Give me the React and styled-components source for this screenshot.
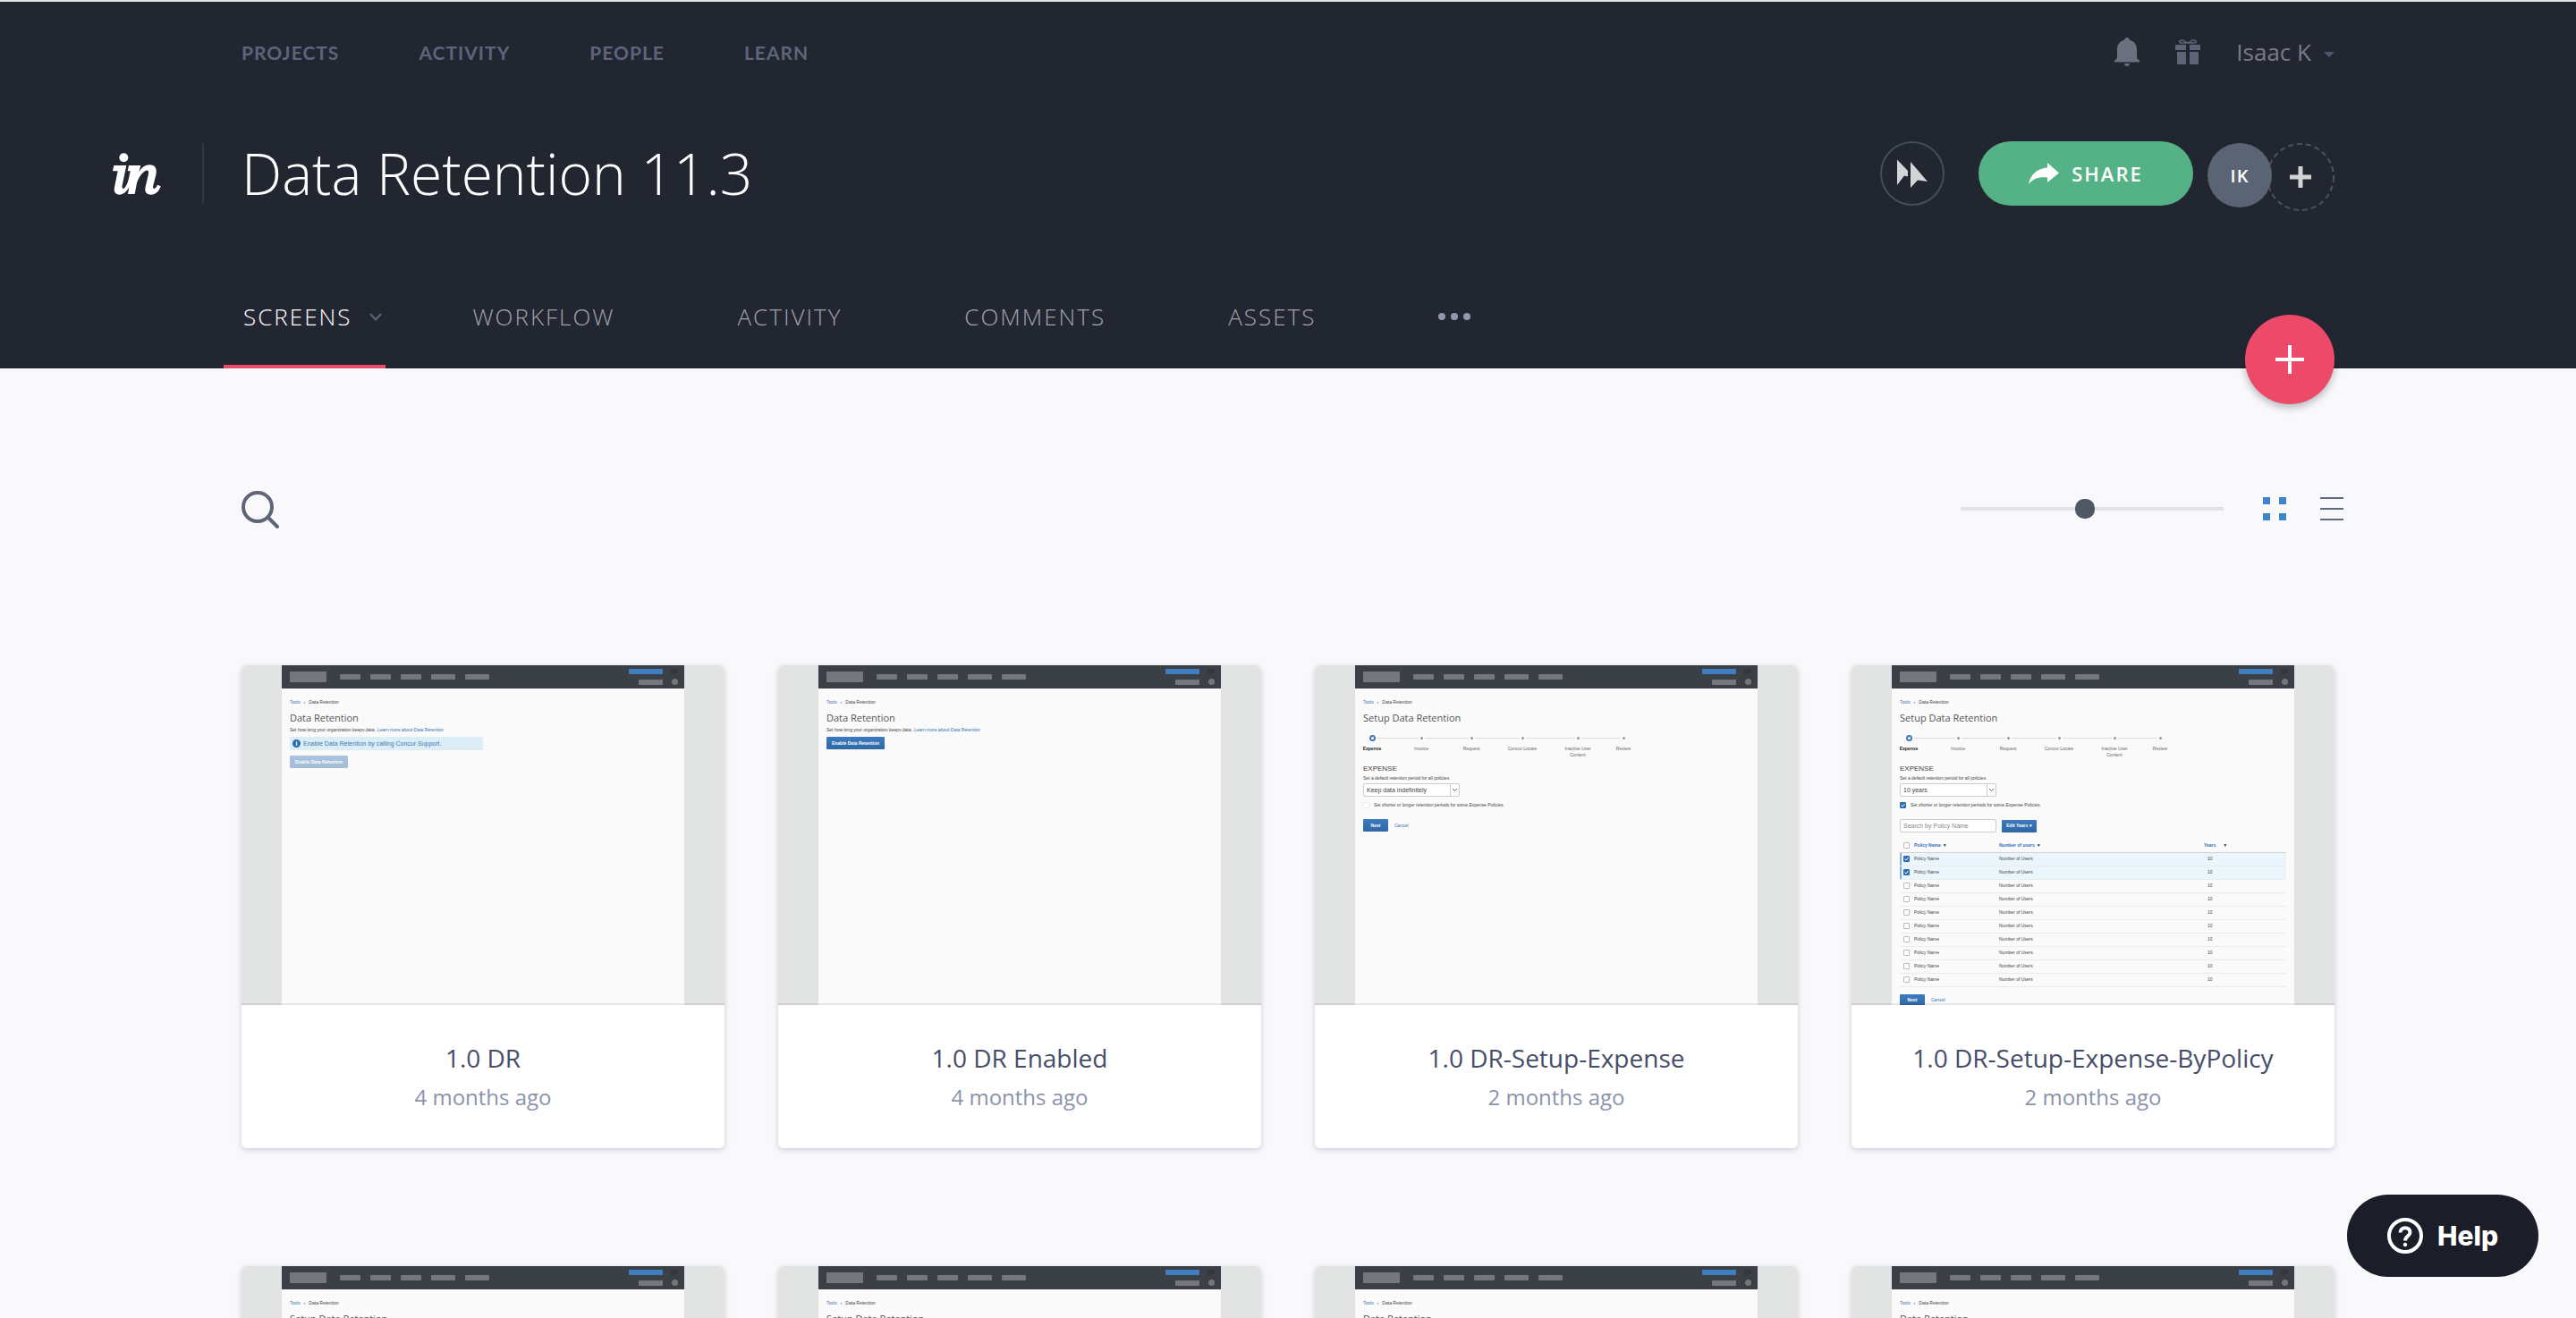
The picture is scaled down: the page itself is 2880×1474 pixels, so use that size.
import React, { useState } from "react";
import styled, { createGlobalStyle, css } from "styled-components";

const color = {
  header: "#222631",
  page: "#f9f9fb",
  accent: "#ed4a69",
  green: "#55b287",
  slate: "#5d6576",
  blue: "#3d85c8",
};

const GlobalStyle = createGlobalStyle`
  *, *::before, *::after { box-sizing: border-box; }
  body {
    margin: 0;
    background: ${color.page};
    font-family: "Open Sans", "Noto Sans", sans-serif;
  }
  button { font: inherit; border: 0; padding: 0; background: none; cursor: pointer; }
  a { color: inherit; text-decoration: none; }
  svg { display: block; flex: none; }
`;

/* ---------- Shell ---------- */

const Shell = styled.div`
  height: 100vh;
  overflow-y: auto;
  scrollbar-width: none;
  background: ${color.page};
`;

const Container = styled.div`
  width: 100%;
  max-width: 2340px;
  margin: 0 auto;
`;

const Header = styled.header`
  background: ${color.header};
  border-top: 2px solid #dfe3e2;
`;

const TopBar = styled.div`
  display: flex;
  align-items: center;
  justify-content: space-between;
  height: 114px;
  padding-bottom: 2px;
`;

const TopNav = styled.nav`
  display: flex;
  gap: 89px;
  font-family: Lato, sans-serif;
  font-size: 21px;
  font-weight: 700;
  letter-spacing: 1px;
  color: #5d657a;
`;

const UserTools = styled.div`
  display: flex;
  align-items: center;
  gap: 40px;
  color: #6d7080;
`;

const IconButton = styled.button`
  display: flex;
  align-items: center;
  justify-content: center;
  color: ${(p) => p.$color || "inherit"};
`;

const UserMenu = styled.button`
  display: flex;
  align-items: center;
  gap: 14px;
  font-size: 26px;
  line-height: 36px;
  color: #787b8a;
  svg { margin-top: 6px; }
`;

/* ---------- Title row ---------- */

const TitleRow = styled.div`
  display: flex;
  align-items: center;
  height: 156px;
  margin: 0 0 24px -145px;
`;

const Brand = styled.a`
  display: flex;
  align-items: center;
  height: 66px;
  width: 103px;
  margin-right: 42px;
  padding-left: 1px;
  border-right: 2px solid #323744;
`;

const Title = styled.h1`
  flex: 1;
  margin: 0;
  font-size: 64px;
  font-weight: 300;
  line-height: 88px;
  color: #fff;
`;

const Actions = styled.div`
  display: flex;
  align-items: flex-start;
  height: 72px;
`;

const PlayButton = styled(IconButton)`
  width: 72px;
  height: 72px;
  margin-right: 38px;
  border: 2px solid #474c5a;
  border-radius: 50%;
`;

const ShareButton = styled.button`
  display: flex;
  align-items: center;
  justify-content: center;
  gap: 14px;
  width: 240px;
  height: 72px;
  margin-right: 16px;
  border-radius: 36px;
  background: ${color.green};
  color: #fff;
  font-size: 22px;
  font-weight: 600;
  letter-spacing: 2px;
`;

const People = styled.div`
  display: flex;
  align-items: flex-start;
  margin-top: 2px;
`;

const Avatar = styled.span`
  z-index: 1;
  display: flex;
  align-items: center;
  justify-content: center;
  width: 72px;
  height: 72px;
  margin-right: -6px;
  border-radius: 50%;
  background: #5b6474;
  color: #fff;
  font-size: 20px;
  font-weight: 600;
  letter-spacing: 1px;
`;

/* ---------- Tabs ---------- */

const TabBar = styled.div`
  position: relative;
  display: flex;
  align-items: stretch;
  height: 116px;
`;

const Tabs = styled.nav`
  display: flex;
  gap: 97px;
  margin-left: -20px;
`;

const Tab = styled.a`
  display: flex;
  align-items: center;
  gap: 20px;
  padding: 0 20px;
  font-size: 26px;
  font-weight: 300;
  letter-spacing: 2px;
  color: #a0a3ad;
  ${(p) =>
    p.$active &&
    css`
      margin-right: -20px;
      padding: 0 4px 0 22px;
      color: #fff;
      box-shadow: inset 0 -4px ${color.accent};
    `}
`;

const AddButton = styled.button`
  position: absolute;
  right: 0;
  bottom: -40px;
  display: flex;
  align-items: center;
  justify-content: center;
  width: 100px;
  height: 100px;
  border-radius: 50%;
  background: ${color.accent};
  box-shadow: 0 4px 8px rgba(30, 35, 50, 0.3);
`;

/* ---------- Toolbar ---------- */

const Toolbar = styled.div`
  display: flex;
  align-items: center;
  justify-content: space-between;
  height: 40px;
  margin: 138px -10px 154px 0;
`;

const ViewTools = styled.div`
  display: flex;
  align-items: center;
  padding-bottom: 2px;
`;

const SizeSlider = styled.input`
  appearance: none;
  width: 294px;
  height: 22px;
  margin: 0 44px 0 0;
  background: linear-gradient(#dfe3e8, #dfe3e8) center / 100% 4px no-repeat;
  &::-webkit-slider-thumb {
    appearance: none;
    width: 22px;
    height: 22px;
    border-radius: 10px;
    background: #4e5766;
  }
`;

const ListButton = styled(IconButton)`
  margin-left: 38px;
`;

/* ---------- Cards ---------- */

const Grid = styled.main`
  display: grid;
  grid-template-columns: repeat(4, minmax(0, 1fr));
  gap: 132px 60px;
  padding-bottom: 132px;
`;

const Card = styled.a`
  display: block;
  overflow: hidden;
  border-radius: 6px;
  background: #fff;
  box-shadow: 0 2px 6px rgba(60, 70, 110, 0.24);
`;

const Thumb = styled.div`
  position: relative;
  height: 380px;
  padding: 0 45px;
  overflow: hidden;
  background: #e2e4e3;
  &::after {
    content: "";
    position: absolute;
    inset: auto 0 0;
    height: 2px;
    background: rgba(0, 0, 0, 0.08);
  }
`;

const Caption = styled.div`
  height: 160px;
  padding-top: 37px;
  text-align: center;
`;

const CardTitle = styled.h2`
  margin: 0;
  font-size: 28px;
  font-weight: 400;
  line-height: 44px;
  color: #464d68;
`;

const CardDate = styled.p`
  margin: 0;
  font-size: 24px;
  line-height: 44px;
  color: #8a94ab;
`;

/* ---------- Screen previews ---------- */

const Sheet = styled.div`
  height: 390px;
  background: #fafafa;
  color: #444;
  font-family: "Liberation Sans", Arial, sans-serif;
  font-size: 5px;
  line-height: 7px;
`;

const SheetBar = styled.div`
  display: flex;
  align-items: center;
  justify-content: space-between;
  height: 26px;
  padding: 0 7px 0 9px;
  background: #3b3f46;
`;

const BarGroup = styled.div`
  display: flex;
  align-items: center;
  gap: 11px;
`;

const BarRight = styled.div`
  display: grid;
  grid-template-columns: auto 8px;
  align-items: center;
  justify-items: end;
  gap: 5px 9px;
`;

const Pill = styled.i`
  width: ${(p) => p.$w}px;
  height: ${(p) => p.$h || 6}px;
  border-radius: ${(p) => p.$r || 1}px;
  background: ${(p) => p.$bg || "#74777b"};
`;

const LogoPill = styled(Pill)`
  margin-right: 4px;
`;

const SheetBody = styled.div`
  padding: 12px 9px 0;
`;

const Crumbs = styled.div`
  display: flex;
  gap: 4px;
  height: 7px;
`;

const Blue = styled.span`
  color: #2f72b4;
`;

const SheetTitle = styled.div`
  margin-top: 5px;
  font-family: "Open Sans", sans-serif;
  font-size: 11px;
  font-weight: 400;
  line-height: 18px;
  color: #555;
`;

const Intro = styled.div`
  display: flex;
  gap: 2px;
  margin: 1px 0 4px;
`;

const Notice = styled.div`
  display: flex;
  align-items: center;
  gap: 3px;
  width: 216px;
  height: 15px;
  margin-bottom: 6px;
  padding-left: 3px;
  background: #dcedf6;
  font-size: 7px;
  color: #3a7ab5;
`;

const InfoDot = styled.i`
  display: flex;
  align-items: center;
  justify-content: center;
  width: 9px;
  height: 9px;
  border-radius: 50%;
  background: #2d6cab;
  color: #fff;
  font-size: 7px;
  font-style: normal;
  font-weight: 700;
`;

const MiniButton = styled.span`
  display: inline-flex;
  align-items: center;
  justify-content: center;
  width: ${(p) => p.$w}px;
  height: 14px;
  border-radius: 1px;
  background: linear-gradient(#3c7bbf, #2f67a5);
  color: #fff;
  font-weight: 700;
  opacity: ${(p) => (p.$faded ? 0.42 : 1)};
`;

const Steps = styled.div`
  display: flex;
  margin: 9px 0 7px -18px;
`;

const Step = styled.div`
  width: ${(p) => p.$w}px;
  text-align: center;
  color: ${(p) => (p.$current ? "#222" : "#666")};
  font-weight: ${(p) => (p.$current ? 700 : 400)};
`;

const StepMark = styled.div`
  display: flex;
  align-items: center;
  justify-content: center;
  height: 8px;
  margin-bottom: 5px;
  &::before,
  &::after {
    content: "";
    flex: 1;
    height: 1px;
    background: #dcdcdc;
  }
  &::before { visibility: ${(p) => (p.$first ? "hidden" : "visible")}; }
  &::after { visibility: ${(p) => (p.$last ? "hidden" : "visible")}; }
`;

const StepDot = styled.i`
  width: ${(p) => (p.$current ? 7 : 3)}px;
  height: ${(p) => (p.$current ? 7 : 3)}px;
  margin: 0 2px;
  border: ${(p) => (p.$current ? "2px solid #3f7dba" : "0")};
  border-radius: 50%;
  background: ${(p) => (p.$current ? "#fff" : "#999")};
`;

const Section = styled.div`
  font-size: 8px;
  line-height: 10px;
`;

const FieldLabel = styled.div`
  margin: 2px 0;
`;

const MiniField = styled.div`
  display: flex;
  align-items: center;
  justify-content: space-between;
  width: 108px;
  height: 15px;
  padding-left: 3px;
  border: 1px solid #ccc;
  border-radius: 2px;
  background: #fff;
  font-size: 7px;
  color: ${(p) => (p.$hint ? "#888" : "#444")};
`;

const Arrow = styled.i`
  display: flex;
  align-items: center;
  justify-content: center;
  align-self: stretch;
  width: 10px;
  border-left: 1px solid #ccc;
`;

const CheckLine = styled.div`
  display: flex;
  align-items: center;
  gap: 5px;
  height: 8px;
  margin: 5px 0 12px;
`;

const Tick = styled.i`
  display: flex;
  align-items: center;
  justify-content: center;
  width: 7px;
  height: 7px;
  border: 1px solid ${(p) => (p.$on ? "#2f6fb0" : p.$light ? "#eee" : "#bbb")};
  border-radius: 1px;
  background: ${(p) => (p.$on ? "#2f6fb0" : "#fff")};
`;

const MiniRow = styled.div`
  display: flex;
  align-items: center;
  gap: ${(p) => p.$gap || 7}px;
`;

const MiniTable = styled.table`
  width: 432px;
  margin: 7px 0 8px;
  border-collapse: collapse;
  table-layout: fixed;
  border-bottom: 1px solid #d0d2d2;
  th,
  td {
    height: 15px;
    padding: 0;
    border-bottom: 1px solid #ebecec;
    text-align: left;
    font-weight: 400;
  }
  th { border-color: #d0d2d2; color: #2f72b4; font-weight: 700; }
  th:last-child, td:last-child { padding-left: 1px; }
`;

const SortMark = styled.span`
  margin-left: ${(p) => p.$gap || 2}px;
  color: #333;
`;

const YearCell = styled.td`
  text-indent: 4px;
`;

const PolicyRow = styled.tr`
  background: ${(p) => (p.$on ? "#ebf6fc" : "none")};
  box-shadow: ${(p) => (p.$on ? "inset 2px 0 #8ab1d4" : "none")};
  ${Tick} { margin-left: 4px; }
`;

const TickMark = () => (
  <svg width="5" height="5" viewBox="0 0 5 5" fill="none" stroke="#fff" aria-hidden="true">
    <path d="M0.500 2.500L2 4L4.500 1" />
  </svg>
);

/* ---------- Help ---------- */

const HelpButton = styled.button`
  position: fixed;
  right: 42px;
  bottom: 46px;
  display: flex;
  align-items: center;
  justify-content: center;
  gap: 16px;
  width: 214px;
  height: 92px;
  border-radius: 46px;
  background: #1b1d28;
  color: #fff;
  font-family: Inter, sans-serif;
  font-size: 30px;
  font-weight: 800;
`;

/* ---------- Icons ---------- */

const Logo = () => (
  <svg width="54" height="48" viewBox="30 50 162 144" fill="#fff" aria-hidden="true">
    <circle cx="67" cy="69" r="15" />
    <path d="M34 95H76L62 162C60 174 66 177 72 168C78 160 82 148 85 134L89 114H80L84 95H124L118 117C128 101 139 93 153 93C173 93 180 107 175 127L166 162C163 173 168 175 173 171C177 168 179 163 180 160L191 165C186 182 174 193 159 193C142 193 136 182 140 166L149 128C152 115 149 110 142 112C130 116 115 138 111 154L104 191H81L85 168C76 184 66 193 53 193C38 193 33 183 36 168L47 114H30Z" />
  </svg>
);

const Bell = () => (
  <svg width="28" height="32" viewBox="0 0 28 32" fill="currentColor" aria-hidden="true">
    <path d="M14 0c1.600 0 2.600 1 2.800 2.600C21.700 4 25 8 25 13v8.500c0 2 1 3.200 3 4V27.500H0V25.500c2-.8 3-2 3-4V13C3 8 6.300 4 11.200 2.600 11.400 1 12.400 0 14 0zM11 29h6c-.3 2-1.400 3-3 3s-2.700-1-3-3z" />
  </svg>
);

const Gift = () => (
  <svg width="28" height="28" viewBox="0 0 28 28" aria-hidden="true">
    <path d="M14 4C11 3 10 1 7.500 1C4 1 4 4 7 4H21C24 4 24 1 20.500 1C18 1 17 3 14 4Z" fill="none" stroke="currentColor" strokeWidth="1.500" />
    <path d="M1.500 6H12v6H0V7.500C0 6.500.5 6 1.500 6zM16 6h10.500c1 0 1.500.5 1.500 1.500V12H16zM2 14h10v14H3.500C2.500 28 2 27.500 2 26.500zM16 14h10v12.500c0 1-.5 1.500-1.500 1.500H16z" fill="currentColor" />
  </svg>
);

const Plus = ({ size, stroke, tone }) => (
  <svg width={size} height={size} viewBox={`0 0 ${size} ${size}`} aria-hidden="true">
    <path d={`M${size / 2} 0V${size}M0 ${size / 2}H${size}`} stroke={tone} strokeWidth={stroke} />
  </svg>
);

const Chevron = () => (
  <svg width="14" height="9" viewBox="0 0 14 9" fill="none" stroke="#5d6578" strokeWidth="2" aria-hidden="true">
    <path d="M1 1L7 7.500L13 1" />
  </svg>
);

/* ---------- Preview content ---------- */

const STEPS = [
  ["Expense", 56],
  ["Invoice", 54],
  ["Request", 58],
  ["Concur Locate", 56],
  ["Inactive User Content", 68],
  ["Review", 34],
];

function Preview({ kind }) {
  const setup = kind === "expense" || kind === "policy";
  const policy = kind === "policy";
  return (
    <Sheet>
      <SheetBar>
        <BarGroup>
          <LogoPill $w={41} $h={12} />
          {[23, 23, 23, 27, 27].map((w, i) => (
            <Pill key={i} $w={w} />
          ))}
        </BarGroup>
        <BarRight>
          <Pill $w={38} $bg="#3f7fc0" />
          <Pill $w={8} $bg="#34373d" />
          <Pill $w={27} />
          <Pill $w={7} $h={7} $r={4} />
        </BarRight>
      </SheetBar>
      <SheetBody>
        <Crumbs>
          <Blue>Tools</Blue>
          <span>›</span>
          <span>Data Retention</span>
        </Crumbs>
        <SheetTitle>{setup ? "Setup Data Retention" : "Data Retention"}</SheetTitle>
        {!setup && (
          <>
            <Intro>
              <span>Set how long your organization keeps data.</span>
              <Blue>Learn more about Data Retention</Blue>
            </Intro>
            {kind === "disabled" && (
              <Notice>
                <InfoDot>i</InfoDot>
                Enable Data Retention by calling Concur Support.
              </Notice>
            )}
            <MiniButton $w={65} $faded={kind === "disabled"}>
              Enable Data Retention
            </MiniButton>
          </>
        )}
        {setup && (
          <>
            <Steps>
              {STEPS.map(([label, w], i) => (
                <Step key={label} $w={w} $current={i === 0}>
                  <StepMark $first={i === 0} $last={i === STEPS.length - 1}>
                    <StepDot $current={i === 0} />
                  </StepMark>
                  {label === "Inactive User Content" ? (
                    <>
                      Inactive User
                      <br />
                      Content
                    </>
                  ) : (
                    label
                  )}
                </Step>
              ))}
            </Steps>
            <Section>EXPENSE</Section>
            <FieldLabel>Set a default retention period for all policies:</FieldLabel>
            <MiniField>
              {policy ? "10 years" : "Keep data indefinitely"}
              <Arrow>
                <svg width="5" height="3" viewBox="0 0 5 3" fill="none" stroke="#666">
                  <path d="M0 0L2.500 2.500L5 0" />
                </svg>
              </Arrow>
            </MiniField>
            <CheckLine>
              <Tick $on={policy} $light={!policy}>{policy && <TickMark />}</Tick>
              <span>Set shorter or longer retention periods for some Expense Policies.</span>
            </CheckLine>
            {policy && (
              <>
                <MiniRow $gap={6}>
                  <MiniField $hint>Search by Policy Name</MiniField>
                  <MiniButton $w={39}>Edit Years ▾</MiniButton>
                </MiniRow>
                <MiniTable>
                  <colgroup>
                    <col width="16" />
                    <col width="95" />
                    <col width="228" />
                    <col />
                  </colgroup>
                  <thead>
                    <PolicyRow>
                      <th><Tick /></th>
                      <th>Policy Name<SortMark>▼</SortMark></th>
                      <th>Number of users<SortMark>▼</SortMark></th>
                      <th>Years<SortMark $gap={8}>▼</SortMark></th>
                    </PolicyRow>
                  </thead>
                  <tbody>
                    {Array.from({ length: 10 }, (_, i) => (
                      <PolicyRow key={i} $on={i < 2}>
                        <td><Tick $on={i < 2}>{i < 2 && <TickMark />}</Tick></td>
                        <td>Policy Name</td>
                        <td>Number of Users</td>
                        <YearCell>10</YearCell>
                      </PolicyRow>
                    ))}
                  </tbody>
                </MiniTable>
              </>
            )}
            <MiniRow>
              <MiniButton $w={28}>Next</MiniButton>
              <Blue>Cancel</Blue>
            </MiniRow>
          </>
        )}
      </SheetBody>
    </Sheet>
  );
}

const SCREENS = [
  { title: "1.0 DR", date: "4 months ago", kind: "disabled" },
  { title: "1.0 DR Enabled", date: "4 months ago", kind: "enabled" },
  { title: "1.0 DR-Setup-Expense", date: "2 months ago", kind: "expense" },
  { title: "1.0 DR-Setup-Expense-ByPolicy", date: "2 months ago", kind: "policy" },
  { kind: "expense" },
  { kind: "expense" },
  { kind: "enabled" },
  { kind: "enabled" },
];

export default function App() {
  const [size, setSize] = useState(47);
  return (
    <Shell>
      <GlobalStyle />
      <Header>
        <Container>
          <TopBar>
            <TopNav aria-label="Main">
              <a href="#projects">PROJECTS</a>
              <a href="#activity">ACTIVITY</a>
              <a href="#people">PEOPLE</a>
              <a href="#learn">LEARN</a>
            </TopNav>
            <UserTools>
              <IconButton aria-label="Notifications"><Bell /></IconButton>
              <IconButton aria-label="Gifts" $color="#5f6375"><Gift /></IconButton>
              <UserMenu>
                Isaac K
                <svg width="12" height="6" viewBox="0 0 12 6" fill="#4e5769" aria-hidden="true">
                  <path d="M0 0H12L6 6Z" />
                </svg>
              </UserMenu>
            </UserTools>
          </TopBar>
          <TitleRow>
            <Brand href="#home" aria-label="Home"><Logo /></Brand>
            <Title>Data Retention 11.3</Title>
            <Actions>
              <PlayButton aria-label="Preview">
                <svg width="34" height="32" viewBox="0 0 34 32" fill="#d3d4d6" aria-hidden="true">
                  <path d="M0 0.500L12 13V19.500L8 18.500L0 29Z" />
                  <path d="M15 3L34 25L23 23.500L15 32Z" />
                </svg>
              </PlayButton>
              <ShareButton>
                <svg width="34" height="24" viewBox="0 0 34 24" fill="#fff" aria-hidden="true">
                  <path d="M21 0L34 11.500L21 22V16.500C12 15.500 5 17.500 0 24C2 13 10 6.500 21 5.500Z" />
                </svg>
                SHARE
              </ShareButton>
              <People>
                <Avatar>IK</Avatar>
                <IconButton aria-label="Add collaborator">
                  <svg width="76" height="76" viewBox="0 0 76 76" fill="none" aria-hidden="true">
                    <circle cx="38" cy="38" r="37" stroke="#4d5260" strokeWidth="2" strokeDasharray="6 4" />
                    <path d="M38 26V50M26 38H50" stroke="#d3d4d6" strokeWidth="5" />
                  </svg>
                </IconButton>
              </People>
            </Actions>
          </TitleRow>
          <TabBar>
            <Tabs aria-label="Project">
              <Tab href="#screens" $active>
                SCREENS <Chevron />
              </Tab>
              <Tab href="#workflow">WORKFLOW</Tab>
              <Tab href="#tab-activity">ACTIVITY</Tab>
              <Tab href="#comments">COMMENTS</Tab>
              <Tab href="#assets">ASSETS</Tab>
              <Tab href="#more" aria-label="More">
                <svg width="36" height="8" viewBox="0 0 36 8" fill="#8e98b0" aria-hidden="true">
                  <circle cx="4" cy="4" r="4" />
                  <circle cx="18" cy="4" r="4" />
                  <circle cx="32" cy="4" r="4" />
                </svg>
              </Tab>
            </Tabs>
            <AddButton aria-label="Add screen">
              <Plus size={32} stroke={4} tone="#fff" />
            </AddButton>
          </TabBar>
        </Container>
      </Header>
      <Container>
        <Toolbar>
          <IconButton aria-label="Search">
            <svg width="42" height="42" viewBox="0 0 42 42" fill="none" stroke={color.slate} aria-hidden="true">
              <circle cx="18" cy="18" r="16" strokeWidth="4" />
              <path d="M29.500 29.500L40 40" strokeWidth="4" strokeLinecap="round" />
            </svg>
          </IconButton>
          <ViewTools>
            <SizeSlider
              type="range"
              aria-label="Thumbnail size"
              value={size}
              onChange={(e) => setSize(Number(e.target.value))}
            />
            <IconButton aria-label="Grid view">
              <svg width="26" height="26" viewBox="0 0 26 26" fill={color.blue} aria-hidden="true">
                <path d="M0 0H8V8H0ZM18 0H26V8H18ZM0 18H8V26H0ZM18 18H26V26H18Z" />
              </svg>
            </IconButton>
            <ListButton aria-label="List view">
              <svg width="26" height="26" viewBox="0 0 26 26" stroke="#5f6a7d" strokeWidth="2" aria-hidden="true">
                <path d="M0 1H26M0 13H26M0 25H26" />
              </svg>
            </ListButton>
          </ViewTools>
        </Toolbar>
        <Grid>
          {SCREENS.map((s, i) => (
            <Card href={`#screen-${i + 1}`} aria-label={s.title || "Screen"} key={i}>
              <Thumb>
                <Preview kind={s.kind} />
              </Thumb>
              <Caption>
                {s.title && <CardTitle>{s.title}</CardTitle>}
                {s.date && <CardDate>{s.date}</CardDate>}
              </Caption>
            </Card>
          ))}
        </Grid>
      </Container>
      <HelpButton>
        <svg width="40" height="40" viewBox="0 0 40 40" fill="none" stroke="#fff" aria-hidden="true">
          <circle cx="20" cy="20" r="18" strokeWidth="4" />
          <path d="M14.500 16.500C14.500 9.500 25.500 9.500 25.500 16C25.500 20.500 20 20.500 20 25.500" strokeWidth="4" />
          <circle cx="20" cy="30" r="2.200" fill="#fff" stroke="none" />
        </svg>
        Help
      </HelpButton>
    </Shell>
  );
}
